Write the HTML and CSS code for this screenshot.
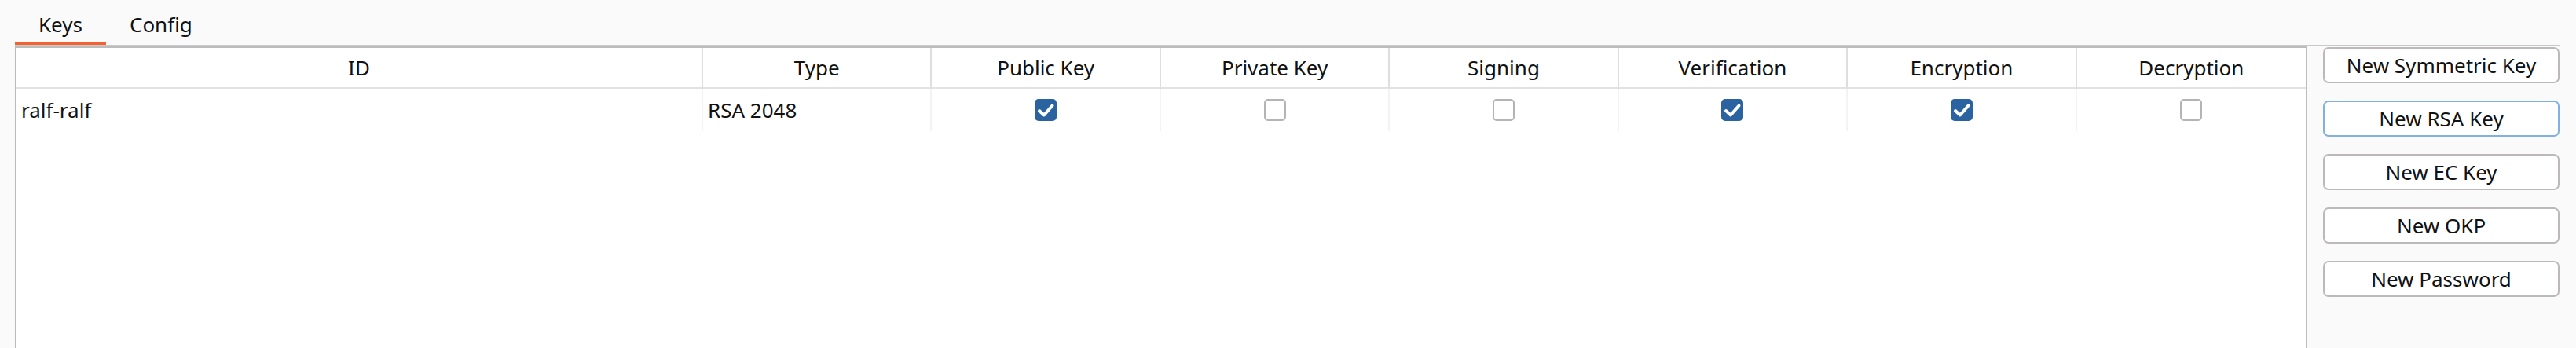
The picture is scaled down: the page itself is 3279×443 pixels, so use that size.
FILE: index.html
```html
<!DOCTYPE html>
<html lang="en">
<head>
    <meta charset="UTF-8">
    <title>Keys</title>
    <link rel="stylesheet" href="styles.css">
</head>
<body>
    <!-- Tab bar -->
    <div class="tabs">
        <div class="tab active">Keys</div>
        <div class="tab">Config</div>
    </div>

    <div class="main">
        <!-- Key table -->
        <div class="pane">
            <div class="grid">
                <div class="th">ID</div>
                <div class="th">Type</div>
                <div class="th">Public Key</div>
                <div class="th">Private Key</div>
                <div class="th">Signing</div>
                <div class="th">Verification</div>
                <div class="th">Encryption</div>
                <div class="th last">Decryption</div>

                <div class="td">ralf-ralf</div>
                <div class="td">RSA 2048</div>
                <div class="td check"><span class="box on"><svg viewBox="0 0 24 24"><path d="M4 13 L10 18.5 L20.5 6.5" /></svg></span></div>
                <div class="td check"><span class="box"></span></div>
                <div class="td check"><span class="box"></span></div>
                <div class="td check"><span class="box on"><svg viewBox="0 0 24 24"><path d="M4 13 L10 18.5 L20.5 6.5" /></svg></span></div>
                <div class="td check"><span class="box on"><svg viewBox="0 0 24 24"><path d="M4 13 L10 18.5 L20.5 6.5" /></svg></span></div>
                <div class="td check last"><span class="box"></span></div>
            </div>
        </div>

        <!-- Actions -->
        <div class="actions">
            <button>New Symmetric Key</button>
            <button class="focused">New RSA Key</button>
            <button>New EC Key</button>
            <button>New OKP</button>
            <button>New Password</button>
        </div>
    </div>
</body>
</html>
```

FILE: styles.css
```css
body {
    margin: 0;
    height: 443px;
    overflow: hidden;
    background-color: #fafafa;
    font-family: "Noto Sans", "Open Sans", sans-serif;
    font-size: 26px;
    color: #111;
}

.tabs {
    display: flex;
    margin-left: 19px;
    width: 3240px;
    border-bottom: 2px solid #c9c9c9;
}

.tab {
    padding: 14px 30px 4px 30px;
    line-height: 35px;
    border-bottom: 4px solid transparent;
}

.tab.active {
    border-bottom-color: #f56130;
}

.main {
    display: flex;
    gap: 20px;
    padding-left: 19px;
}

.pane {
    width: 2914px;
    height: 400px;
    background-color: #fff;
    border: 2px solid #bcbcbc;
    border-bottom: none;
}

.grid {
    display: grid;
    grid-template-columns: 874px repeat(7, 1fr);
}

.th {
    height: 50px;
    line-height: 50px;
    text-align: center;
    border-right: 2px solid #dedede;
    border-bottom: 2px solid #e2e2e2;
}

.td {
    height: 54px;
    line-height: 54px;
    padding: 0 6px;
    border-right: 2px solid #f3f3f3;
}

.th.last,
.td.last {
    border-right: none;
}

.check {
    display: flex;
    justify-content: center;
    align-items: center;
    padding: 0;
}

.box {
    width: 24px;
    height: 24px;
    border: 2px solid #b4b4b4;
    border-radius: 5px;
    box-sizing: content-box;
}

.box.on {
    background-color: #2a63a0;
    border-color: #2a63a0;
}

.box svg {
    display: block;
    width: 24px;
    height: 24px;
}

.box path {
    fill: none;
    stroke: #fff;
    stroke-width: 4;
    stroke-linecap: round;
    stroke-linejoin: round;
}

.actions {
    display: flex;
    flex-direction: column;
    gap: 22px;
    padding-top: 1px;
}

button {
    width: 301px;
    height: 46px;
    padding: 0;
    font-family: inherit;
    font-size: 26px;
    color: #111;
    background-color: #fff;
    border: 2px solid #bdb9ba;
    border-radius: 7px;
}

button.focused {
    border-color: #82b0e0;
}
```
